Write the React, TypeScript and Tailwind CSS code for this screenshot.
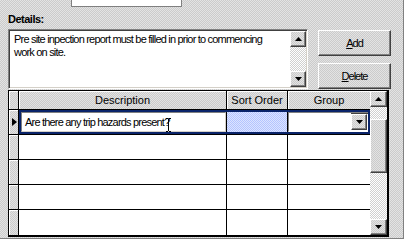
import React from "react";

const raised =
  "border border-t-white border-l-white border-r-[#404040] border-b-[#404040] shadow-[inset_-1px_-1px_0_#808080]";
const dither =
  "bg-[conic-gradient(#cbcbcb_25%,#e3e3e3_0_50%,#cbcbcb_0_75%,#e3e3e3_0)] bg-[length:2px_2px]";
const track =
  "bg-[conic-gradient(#ffffff_25%,#d0d0d0_0_50%,#ffffff_0_75%,#d0d0d0_0)] bg-[length:2px_2px]";

function Arrow({ dir }: { dir: "up" | "down" }) {
  return (
    <svg width="7" height="4" viewBox="0 0 7 4">
      {dir === "up" ? (
        <polygon points="3.5,0 7,4 0,4" fill="#000" />
      ) : (
        <polygon points="0,0 7,0 3.5,4" fill="#000" />
      )}
    </svg>
  );
}

function ScrollBtn({ dir }: { dir: "up" | "down" }) {
  return (
    <div className={`h-[16px] w-full shrink-0 flex items-center justify-center ${dither} ${raised}`}>
      <Arrow dir={dir} />
    </div>
  );
}

function RowHead({ active }: { active?: boolean }) {
  return (
    <div className={`w-[10px] h-full border-r border-black flex items-center justify-end pr-[1px] ${dither} shadow-[inset_1px_1px_0_#ffffff]`}>
      {active && (
        <svg width="5" height="8" viewBox="0 0 5 8">
          <polygon points="0,0 5,4 0,8" fill="#000" />
        </svg>
      )}
    </div>
  );
}

function EmptyRow({ last }: { last?: boolean }) {
  return (
    <div className={`h-[25px] flex ${last ? "" : "border-b border-black"}`}>
      <RowHead />
      <div className="w-[208px] h-full border-r border-black bg-white" />
      <div className="w-[61px] h-full border-r border-black bg-white" />
      <div className="flex-1 h-full bg-white" />
    </div>
  );
}

export default function App() {
  return (
    <div className="w-[406px] h-[241px] bg-white overflow-hidden font-['Liberation_Sans',Arial,sans-serif] text-black">
      <div className={`w-[404px] h-[239px] border-r border-b border-[#808080] flex flex-col pl-[8px] ${dither}`}>
        {/* top field, cut off */}
        <div className="ml-[63px] w-[111px] h-[7px] shrink-0 bg-white border-x border-b border-[#808080]" />

        <div className="mt-[6px] h-[13px] shrink-0 text-[11px] leading-[13px] font-bold tracking-[-0.5px]">
          Details:
        </div>

        <div className="mt-[3px] flex items-start shrink-0">
          {/* details memo */}
          <div className="w-[300px] h-[60px] flex border border-t-[#808080] border-l-[#808080] border-b-white border-r-white shadow-[inset_1px_1px_0_#404040,inset_-1px_-1px_0_#d4d0c8] p-[1px]">
            <div className="flex-1 bg-white pl-[4px] pt-[2px] text-[11px] leading-[13px] tracking-[-0.8px]">
              Pre site inpection report must be filled in prior to commencing
              <br />
              work on site.
            </div>
            <div className={`w-[16px] flex flex-col ${track}`}>
              <ScrollBtn dir="up" />
              <div className="flex-1" />
              <ScrollBtn dir="down" />
            </div>
          </div>

          {/* buttons */}
          <div className="ml-[10px] pt-[1px] w-[73px] flex flex-col gap-[7px]">
            <div className={`h-[26px] flex items-center justify-center text-[11px] tracking-[-1px] ${dither} ${raised}`}>
              <span>
                <span className="underline underline-offset-[1px]">A</span>dd
              </span>
            </div>
            <div className={`h-[26px] flex items-center justify-center text-[11px] tracking-[-1px] ${dither} ${raised}`}>
              <span>
                <span className="underline underline-offset-[1px]">D</span>elete
              </span>
            </div>
          </div>
        </div>

        {/* grid */}
        <div className="mt-[1px] w-[381px] h-[147px] shrink-0 flex border-l border-t border-r-2 border-b-2 border-black">
          <div className="w-[361px] flex flex-col">
            {/* header */}
            <div className="h-[19px] flex border-b border-black text-[11px] leading-[18px]">
              <div className={`w-[10px] border-r border-black ${dither} shadow-[inset_1px_1px_0_#ffffff]`} />
              <div className={`w-[208px] border-r border-black text-center ${dither} shadow-[inset_1px_1px_0_#ffffff]`}>
                Description
              </div>
              <div className={`w-[61px] border-r border-black text-center ${dither} shadow-[inset_1px_1px_0_#ffffff]`}>
                Sort Order
              </div>
              <div className={`flex-1 text-center ${dither} shadow-[inset_1px_1px_0_#ffffff]`}>Group</div>
            </div>

            {/* active row */}
            <div className="h-[25px] flex border-b border-black relative">
              <RowHead active />
              <div className="w-[208px] h-full border-r border-black bg-white pl-[2px] py-[2px]">
                <div className="h-full bg-white border border-t-[#808080] border-l-[#808080] border-b-[#d4d0c8] border-r-[#d4d0c8] pl-[3px] text-[11px] leading-[18px] tracking-[-0.8px] relative">
                  Are there any trip hazards present
                  <span className="relative">
                    ?
                    <svg
                      className="absolute left-[2px] top-[2px]"
                      width="5"
                      height="14"
                      viewBox="0 0 5 14"
                    >
                      <path d="M0 0.5H2M3 0.5H5M2.5 1V13M0 13.5H2M3 13.5H5" stroke="#000" strokeWidth="1" fill="none" />
                    </svg>
                  </span>
                </div>
              </div>
              <div className="w-[61px] h-full border-r border-black bg-[conic-gradient(#b4c4ff_25%,#dce4ff_0_50%,#b4c4ff_0_75%,#dce4ff_0)] bg-[length:2px_2px]" />
              <div className="flex-1 h-full bg-white py-[2px] pr-[1px]">
                <div className="h-full flex border border-t-[#808080] border-l-[#808080] border-b-white border-r-white shadow-[inset_1px_1px_0_#404040]">
                  <div className="flex-1 bg-white" />
                  <div className={`w-[16px] my-[1px] mr-[1px] flex items-center justify-center ${dither} ${raised}`}>
                    <Arrow dir="down" />
                  </div>
                </div>
              </div>
              <div className="absolute left-[10px] right-0 top-0 bottom-0 border-2 border-[#0a246a] pointer-events-none" />
            </div>

            <EmptyRow />
            <EmptyRow />
            <EmptyRow />
            <EmptyRow last />
          </div>

          {/* vertical scrollbar */}
          <div className={`flex-1 flex flex-col ${track}`}>
            <ScrollBtn dir="up" />
            <div className={`mt-[12px] h-[54px] shrink-0 ${dither} ${raised}`} />
            <div className="flex-1" />
            <ScrollBtn dir="down" />
          </div>
        </div>
      </div>
    </div>
  );
}
